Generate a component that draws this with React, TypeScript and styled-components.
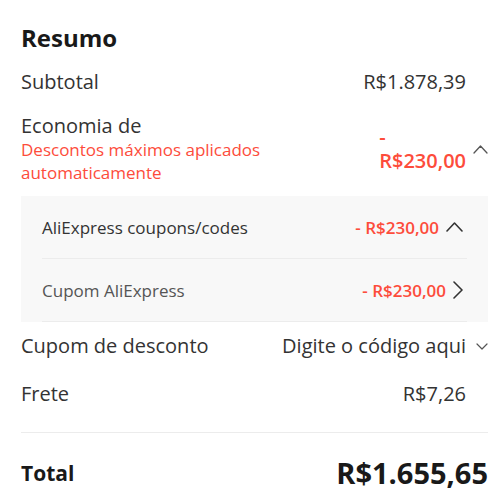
import React from "react";
import styled, { createGlobalStyle } from "styled-components";

const RED = "#fd4c3b";

const Global = createGlobalStyle`
  html, body { margin: 0; padding: 0; background: #fff; }
  body { font-family: "Open Sans", "Noto Sans", sans-serif; color: #222; }
`;

const Card = styled.div`
  width: 500px;
  box-sizing: border-box;
  padding: 23px 12px 10px 21px;
`;

const Title = styled.h2`
  margin: 0;
  font-size: 24px;
  line-height: 30px;
  font-weight: 700;
  color: #191919;
`;

const Row = styled.div<{ $mt: number }>`
  display: flex;
  align-items: center;
  justify-content: space-between;
  margin-top: ${(p) => p.$mt}px;
  font-size: 20px;
  line-height: 24px;
  color: #333;
`;

const Label = styled.div``;

const Right = styled.div`
  display: flex;
  align-items: center;
`;

const Value = styled.span`
  color: #333;
`;

const WrapValue = styled.span`
  width: min-content;
  color: ${RED};
  font-weight: 600;
  text-align: left;
`;

const IconSlot = styled.span`
  width: 22px;
  display: flex;
  justify-content: flex-end;
  align-items: center;
`;

const SubIcon = styled.span`
  display: flex;
  align-items: center;
  margin-right: 4px;
`;

const SavingsLeft = styled.div`
  display: flex;
  flex-direction: column;
`;

const Note = styled.div`
  width: 270px;
  font-size: 17px;
  line-height: 23px;
  color: ${RED};
`;

const Panel = styled.div`
  margin-top: 12px;
  background: #f8f8f8;
  padding: 0 21px;
`;

const SubRow = styled.div<{ $muted?: boolean }>`
  display: flex;
  align-items: center;
  justify-content: space-between;
  height: 62px;
  border-bottom: 1px solid #ececec;
  font-size: 17px;
  color: ${(p) => (p.$muted ? "#555" : "#333")};
`;

const SubValue = styled.span`
  color: ${RED};
  font-weight: 600;
  margin-right: 7px;
`;

const Divider = styled.div`
  margin-top: 26px;
  height: 1px;
  background: #ececec;
`;

const TotalRow = styled.div`
  display: flex;
  justify-content: space-between;
  align-items: center;
  margin-top: 25px;
  line-height: 30px;
  color: #191919;
`;

const TotalLabel = styled.span`
  font-size: 21px;
  font-weight: 700;
`;

const TotalValue = styled.span`
  font-size: 29px;
  font-weight: 700;
`;

const Chevron = ({ dir, w, h, sw = 1.5, color = "#333" }: { dir: "up" | "down" | "right"; w: number; h: number; sw?: number; color?: string }) => {
  let d = "";
  if (dir === "up") d = `M1 ${h - 1} L${w / 2} 1 L${w - 1} ${h - 1}`;
  if (dir === "down") d = `M1 1 L${w / 2} ${h - 1} L${w - 1} 1`;
  if (dir === "right") d = `M1 1 L${w - 1} ${h / 2} L1 ${h - 1}`;
  return (
    <svg width={w} height={h} viewBox={`0 0 ${w} ${h}`} fill="none">
      <path d={d} stroke={color} strokeWidth={sw} strokeLinecap="round" strokeLinejoin="round" />
    </svg>
  );
};

export default function App() {
  return (
    <>
      <Global />
      <Card>
        <Title>Resumo</Title>
        <Row $mt={17}>
          <Label>Subtotal</Label>
          <Right>
            <Value>R$1.878,39</Value>
            <IconSlot />
          </Right>
        </Row>
        <Row $mt={20}>
          <SavingsLeft>
            <Label>Economia de</Label>
            <Note>Descontos máximos aplicados automaticamente</Note>
          </SavingsLeft>
          <Right>
            <WrapValue>- R$230,00</WrapValue>
            <IconSlot>
              <Chevron dir="up" w={15} h={9} color="#555" sw={1.3} />
            </IconSlot>
          </Right>
        </Row>
        <Panel>
          <SubRow>
            <span>AliExpress coupons/codes</span>
            <Right>
              <SubValue>- R$230,00</SubValue>
              <SubIcon>
                <Chevron dir="up" w={17} h={10} sw={1.6} />
              </SubIcon>
            </Right>
          </SubRow>
          <SubRow $muted>
            <span>Cupom AliExpress</span>
            <Right>
              <SubValue>- R$230,00</SubValue>
              <SubIcon>
                <Chevron dir="right" w={10} h={18} sw={1.6} />
              </SubIcon>
            </Right>
          </SubRow>
        </Panel>
        <Row $mt={12}>
          <Label>Cupom de desconto</Label>
          <Right>
            <Value>Digite o código aqui</Value>
            <IconSlot>
              <Chevron dir="down" w={12} h={7} color="#555" sw={1.2} />
            </IconSlot>
          </Right>
        </Row>
        <Row $mt={24}>
          <Label>Frete</Label>
          <Right>
            <Value>R$7,26</Value>
            <IconSlot />
          </Right>
        </Row>
        <Divider />
        <TotalRow>
          <TotalLabel>Total</TotalLabel>
          <TotalValue>R$1.655,65</TotalValue>
        </TotalRow>
      </Card>
    </>
  );
}
